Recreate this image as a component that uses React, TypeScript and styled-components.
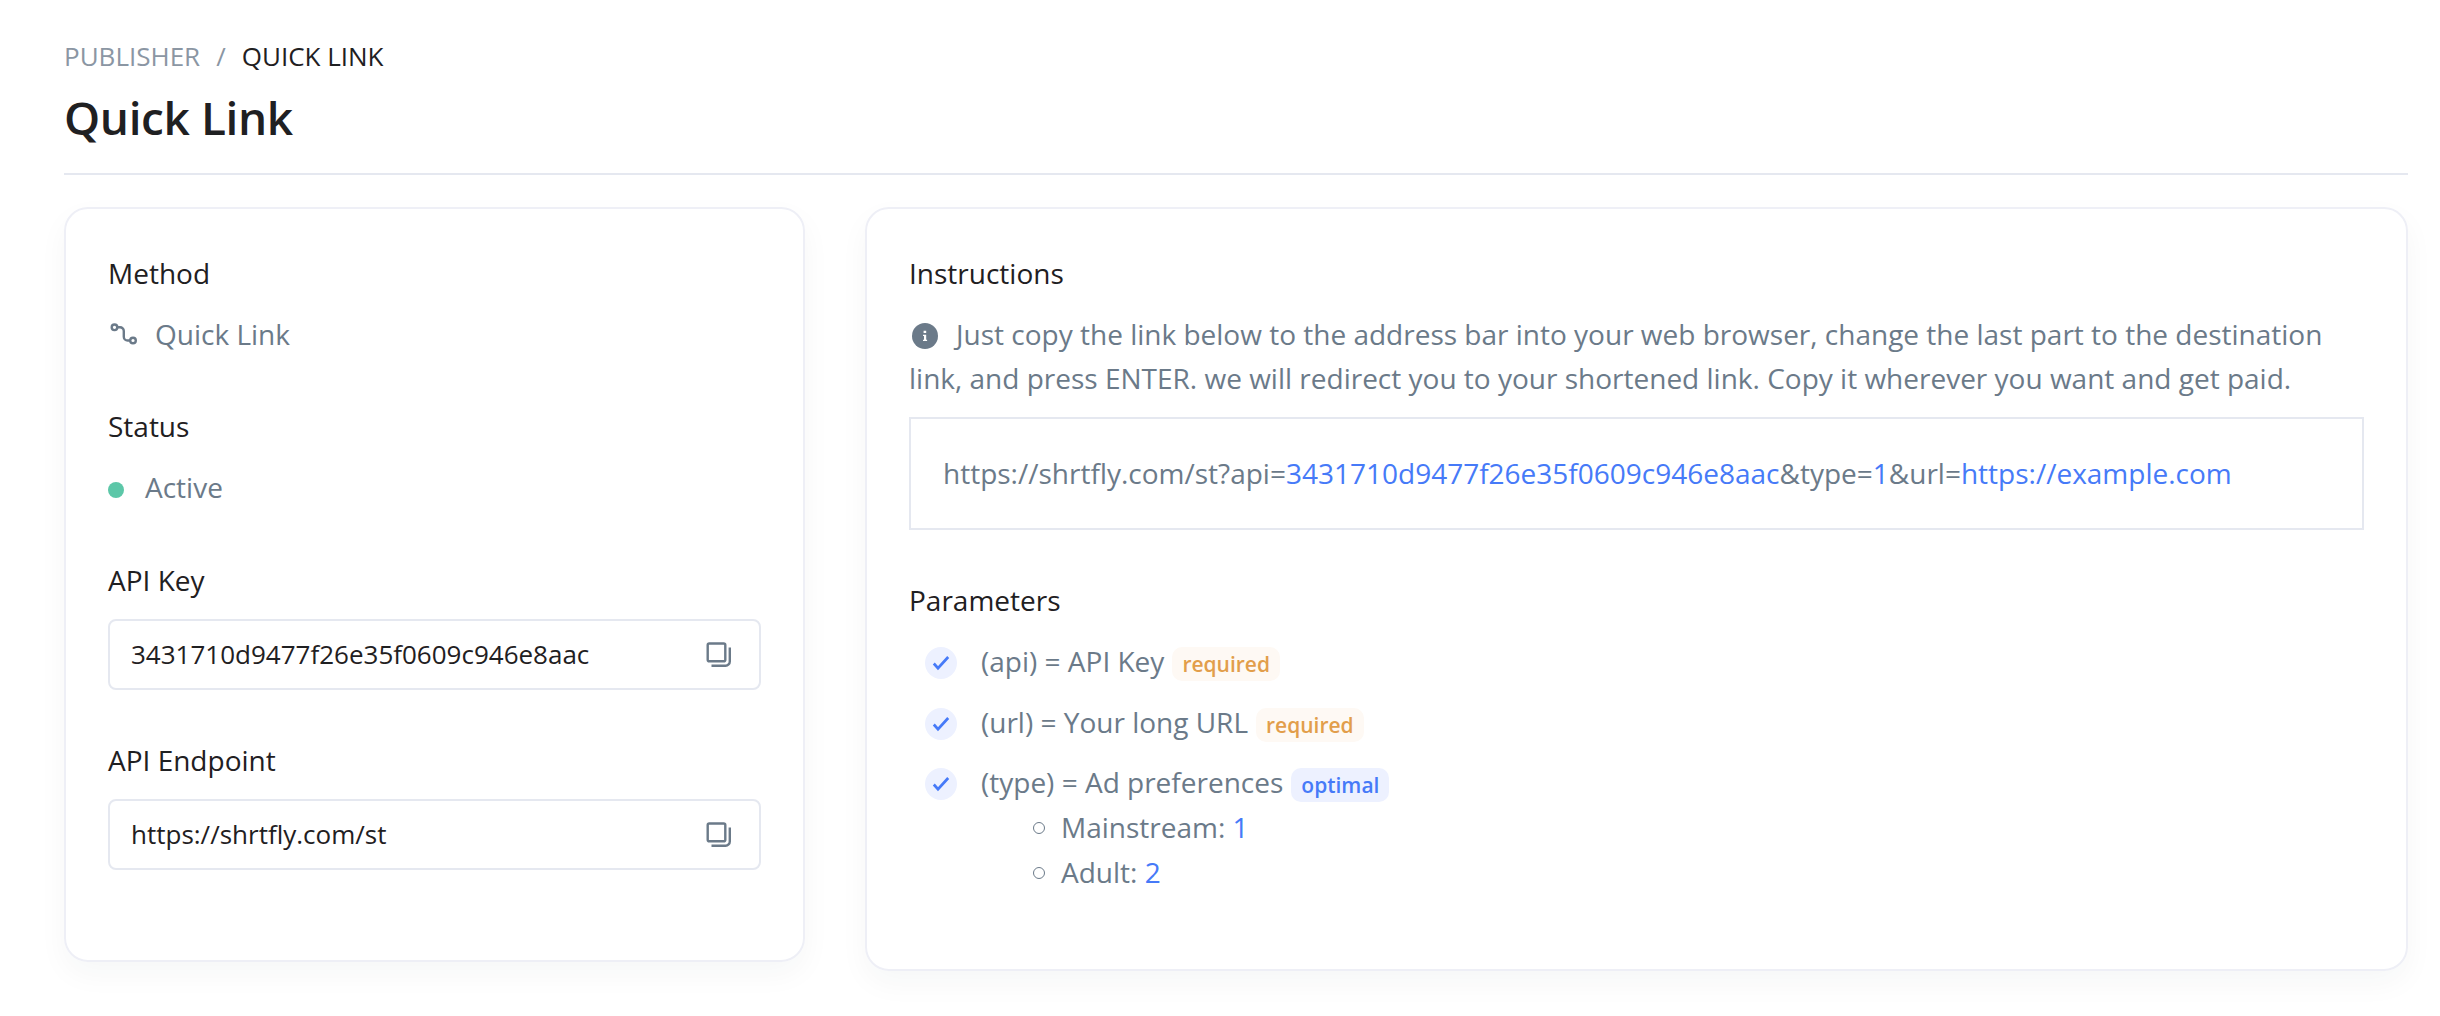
import React from "react";
import styled, { createGlobalStyle } from "styled-components";

const GlobalStyle = createGlobalStyle`
  *, *::before, *::after { box-sizing: border-box; }
  body {
    margin: 0;
    background: #fff;
    color: #6b7a89;
    font: 400 28px/44.8px "Open Sans", "Noto Sans", sans-serif;
  }
`;

const Page = styled.main`
  height: 1016px;
  padding: 36px 32px 0 64px;
  overflow: hidden;
`;

const Header = styled.header`
  height: 139px;
  border-bottom: 2px solid #e5e8f0;
`;

const Breadcrumb = styled.nav`
  display: flex;
  gap: 16px;
  font-size: 26px;
  line-height: 40px;
  color: #8b96a3;
`;

const Crumb = styled.span<{ $current?: boolean }>`
  color: ${(p) => (p.$current ? "#1f2022" : "#8b96a3")};
`;

const Title = styled.h1`
  margin: 11px 0 0;
  font-size: 46px;
  line-height: 60px;
  font-weight: 600;
  letter-spacing: -0.4px;
  color: #1f2022;
`;

const Columns = styled.div`
  display: flex;
  align-items: flex-start;
  gap: 60px;
  margin-top: 32px;
`;

const Card = styled.section<{ $width: number; $height: number }>`
  width: ${(p) => p.$width}px;
  height: ${(p) => p.$height}px;
  padding: 41.8px 42px 0;
  border: 2px solid #eeeff6;
  border-radius: 24px;
  box-shadow: 0 12px 30px rgba(31, 43, 61, 0.04);
`;

const Field = styled.div`
  & + & { margin-top: 48px; }
`;

const Label = styled.h2`
  margin: 0 0 16px;
  font-size: 28px;
  line-height: 44.8px;
  font-weight: 400;
  color: #1f2022;
`;

const Value = styled.div<{ $gap: number }>`
  display: flex;
  align-items: center;
  gap: ${(p) => p.$gap}px;
`;

const Dot = styled.span`
  width: 16px;
  height: 16px;
  margin-top: 4px;
  border-radius: 50%;
  background: #5cc7a8;
`;

const CopyBox = styled.div`
  display: flex;
  align-items: center;
  justify-content: space-between;
  height: 71.2px;
  padding: 0 27px 0 21px;
  border: 2px solid #e5e8f0;
  border-radius: 8px;
  font-size: 26px;
  color: #1f2022;
`;

const CopyButton = styled.button`
  display: flex;
  margin-top: 1px;
  padding: 0;
  border: 0;
  background: none;
  color: #6b7a89;
`;

const Text = styled.p`
  margin: 0 0 16px;
`;

const InlineIcon = styled.span`
  display: inline-block;
  width: 47px;
  height: 26px;
  padding-left: 3px;
  vertical-align: -4px;
  line-height: 0;
`;

const CodeBox = styled.div`
  padding: 32px;
  border: 2px solid #e5e8f0;
`;

const Accent = styled.span`
  color: #467af8;
`;

const ParamList = styled.ul`
  display: grid;
  gap: 16px;
  margin: 0;
  padding: 0 0 0 16px;
  list-style: none;
`;

const Param = styled.li`
  display: flex;
  align-items: flex-start;
  gap: 24px;
`;

const CheckMark = styled.span`
  display: flex;
  align-items: center;
  justify-content: center;
  width: 32px;
  height: 32px;
  margin-top: 8px;
  border-radius: 50%;
  background: #edf1ff;
  color: #467af8;
`;

const ParamTitle = styled.div`
  display: flex;
  align-items: flex-start;
  gap: 8px;
`;

const Badge = styled.span<{ $tone: "warning" | "primary" }>`
  height: 34px;
  margin-top: 8px;
  padding: 0 10px;
  border-radius: 10px;
  font-size: 21px;
  line-height: 34px;
  font-weight: 600;
  color: ${(p) => (p.$tone === "warning" ? "#e29e4b" : "#467af8")};
  background: ${(p) => (p.$tone === "warning" ? "#fef9f4" : "#edf1ff")};
`;

const SubList = styled.ul`
  margin: 0;
  padding: 0 0 0 52px;
  list-style: none;
`;

const SubItem = styled.li`
  display: flex;
  align-items: center;
  gap: 16px;

  &::before {
    content: "";
    width: 12px;
    height: 12px;
    margin-top: 1px;
    border: 1px solid #6b7a89;
    border-radius: 50%;
  }
`;

const RouteIcon = () => (
  <svg width="32" height="32" viewBox="0 0 32 32" fill="none" stroke="currentColor" strokeWidth="2.4">
    <circle cx="6.500" cy="9.300" r="2.800" />
    <circle cx="25" cy="22.500" r="2.800" />
    <path d="M9.300 9.300H12a3.800 3.800 0 0 1 3.800 3.800v5.600a3.800 3.800 0 0 0 3.800 3.800h2.600" />
  </svg>
);

const CopyIcon = () => (
  <svg width="26" height="26" viewBox="0 0 26 26" fill="none" stroke="currentColor" strokeWidth="2.4">
    <rect x="1.700" y="1.500" width="17.600" height="17.800" rx="1.600" />
    <path d="M23.800 5.500V19.500a4.200 4.200 0 0 1-4.200 4.200H5.500" />
  </svg>
);

const InfoIcon = () => (
  <svg width="26" height="26" viewBox="0 0 26 26">
    <circle cx="13" cy="13" r="13" fill="#6b7a89" />
    <path d="M11.600 7.700h2.600v2.400h-2.600zM11 11.700h3.200v5h.9v1.400H11v-1.400h1v-3.600h-1z" fill="#fff" />
  </svg>
);

const CheckIcon = () => (
  <svg width="18" height="16" viewBox="0 0 18 16" fill="none" stroke="currentColor" strokeWidth="2.700">
    <path d="M1.800 8.500 6 13.200 16.200 2" />
  </svg>
);

const API_KEY = "3431710d9477f26e35f0609c946e8aac";

const CopyField = ({ label, value }: { label: string; value: string }) => (
  <Field>
    <Label>{label}</Label>
    <CopyBox>
      <span>{value}</span>
      <CopyButton aria-label="Copy">
        <CopyIcon />
      </CopyButton>
    </CopyBox>
  </Field>
);

type ParamRowProps = {
  name: string;
  badge: string;
  tone: "warning" | "primary";
  children?: React.ReactNode;
};

const ParamRow = ({ name, badge, tone, children }: ParamRowProps) => (
  <Param>
    <CheckMark>
      <CheckIcon />
    </CheckMark>
    <div>
      <ParamTitle>
        <span>{name}</span>
        <Badge $tone={tone}>{badge}</Badge>
      </ParamTitle>
      {children}
    </div>
  </Param>
);

export default function App() {
  return (
    <>
      <GlobalStyle />
      <Page>
        <Header>
          <Breadcrumb>
            <Crumb>PUBLISHER</Crumb>
            <Crumb>/</Crumb>
            <Crumb $current>QUICK LINK</Crumb>
          </Breadcrumb>
          <Title>Quick Link</Title>
        </Header>
        <Columns>
          <Card $width={741} $height={755}>
            <Field>
              <Label>Method</Label>
              <Value $gap={15}>
                <RouteIcon />
                <span>Quick Link</span>
              </Value>
            </Field>
            <Field>
              <Label>Status</Label>
              <Value $gap={21}>
                <Dot />
                <span>Active</span>
              </Value>
            </Field>
            <CopyField label="API Key" value={API_KEY} />
            <CopyField label="API Endpoint" value="https://shrtfly.com/st" />
          </Card>
          <Card $width={1543} $height={764}>
            <Field>
              <Label>Instructions</Label>
              <Text>
                <InlineIcon>
                  <InfoIcon />
                </InlineIcon>
                Just copy the link below to the address bar into your web browser, change the last part to the
                destination link, and press ENTER. we will redirect you to your shortened link. Copy it wherever you
                want and get paid.
              </Text>
              <CodeBox>
                https://shrtfly.com/st?api=<Accent>{API_KEY}</Accent>&amp;type=<Accent>1</Accent>&amp;url=
                <Accent>https://example.com</Accent>
              </CodeBox>
            </Field>
            <Field>
              <Label>Parameters</Label>
              <ParamList>
                <ParamRow name="(api) = API Key" badge="required" tone="warning" />
                <ParamRow name="(url) = Your long URL" badge="required" tone="warning" />
                <ParamRow name="(type) = Ad preferences" badge="optimal" tone="primary">
                  <SubList>
                    <SubItem>
                      <span>
                        Mainstream: <Accent>1</Accent>
                      </span>
                    </SubItem>
                    <SubItem>
                      <span>
                        Adult: <Accent>2</Accent>
                      </span>
                    </SubItem>
                  </SubList>
                </ParamRow>
              </ParamList>
            </Field>
          </Card>
        </Columns>
      </Page>
    </>
  );
}
